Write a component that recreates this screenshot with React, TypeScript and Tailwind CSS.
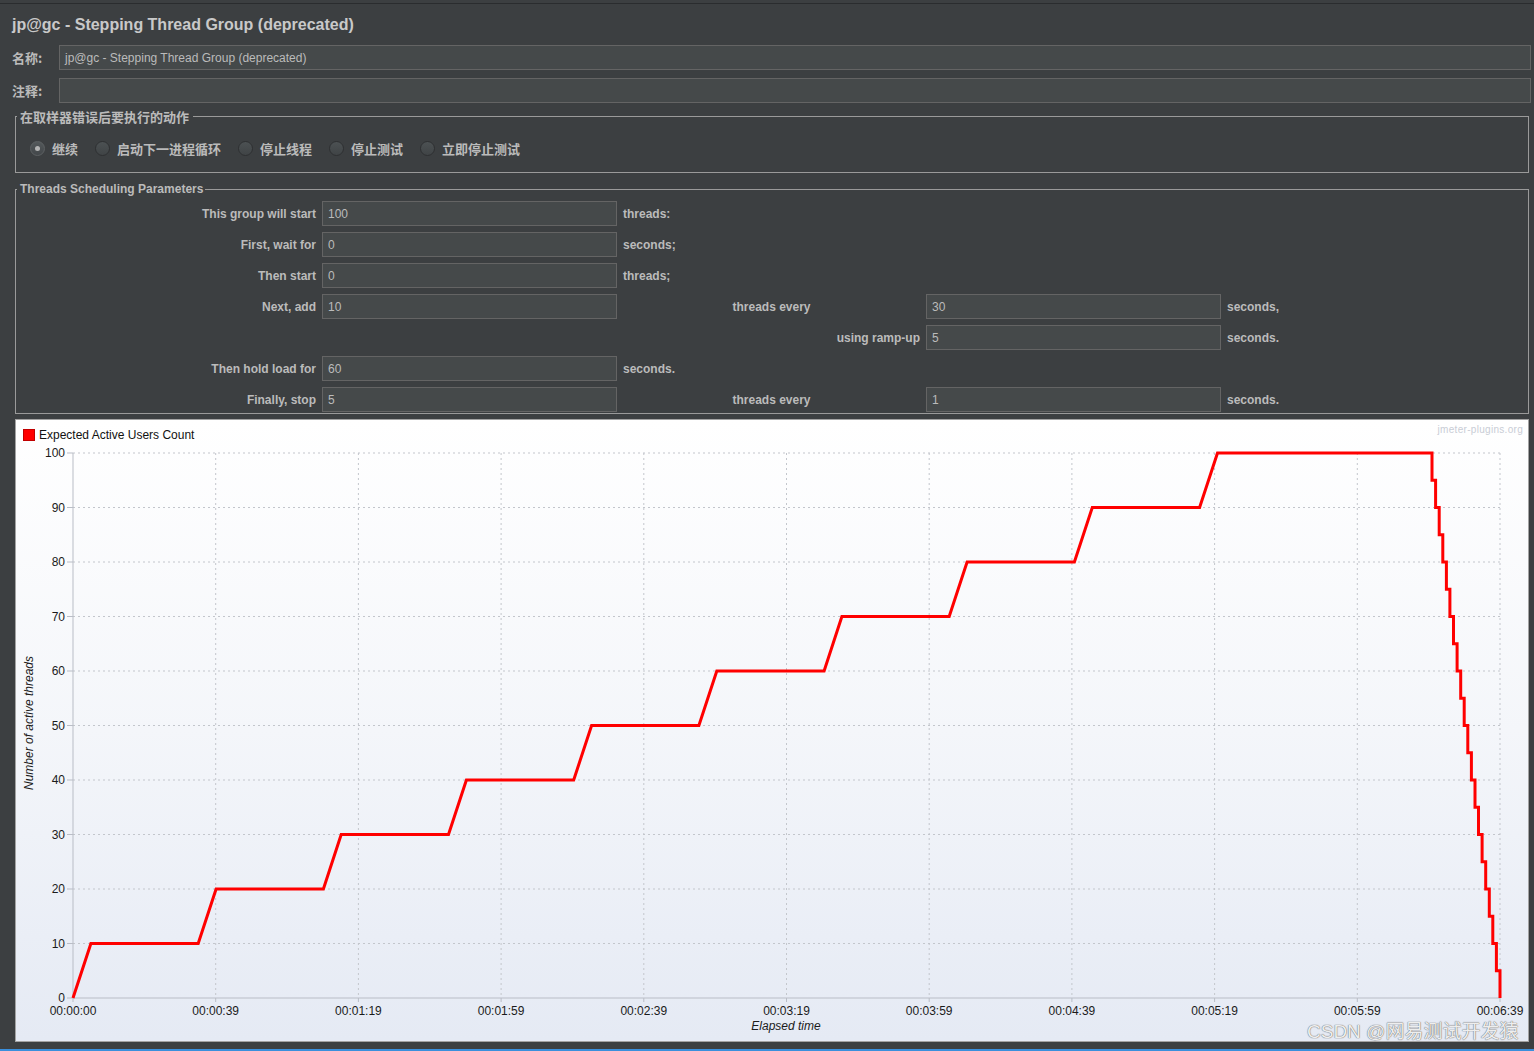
import React from 'react';

type ParamRow = {
  label?: string;
  value?: string;
  unit?: string;
  mid?: string;
  midRight?: boolean;
  value2?: string;
  unit2?: string;
};

const params: ParamRow[] = [
  { label: 'This group will start', value: '100', unit: 'threads:' },
  { label: 'First, wait for', value: '0', unit: 'seconds;' },
  { label: 'Then start', value: '0', unit: 'threads;' },
  { label: 'Next, add', value: '10', mid: 'threads every', value2: '30', unit2: 'seconds,' },
  { mid: 'using ramp-up', midRight: true, value2: '5', unit2: 'seconds.' },
  { label: 'Then hold load for', value: '60', unit: 'seconds.' },
  { label: 'Finally, stop', value: '5', mid: 'threads every', value2: '1', unit2: 'seconds.' },
];

const radios = ['继续', '启动下一进程循环', '停止线程', '停止测试', '立即停止测试'];

const xLabels = [
  '00:00:00', '00:00:39', '00:01:19', '00:01:59', '00:02:39', '00:03:19',
  '00:03:59', '00:04:39', '00:05:19', '00:05:59', '00:06:39',
];

// chart coords (svg origin = panel inner top-left below the legend)
const X = (t: number) => 57 + t * (1427 / 399);
const Y = (v: number) => 553 - v * 5.45;

const buildLine = () => {
  const pts: [number, number][] = [[0, 0]];
  for (let k = 0; k < 10; k++) {
    pts.push([35 * k + 5, 10 * k + 10]);
    pts.push([k < 9 ? 35 * (k + 1) : 380, 10 * k + 10]);
  }
  for (let i = 0; i < 20; i++) {
    pts.push([380 + i, 95 - 5 * i]);
    if (i < 19) pts.push([381 + i, 95 - 5 * i]);
  }
  return pts.map(([t, v]) => `${X(t).toFixed(1)},${Y(v).toFixed(1)}`).join(' ');
};

const Field: React.FC<{ value?: string }> = ({ value }) => (
  <div className="h-[25px] bg-[#45494a] border border-[#646464] pl-[5px] flex items-center text-[12px] font-normal text-[#bbbbbb]">
    {value}
  </div>
);

const Radio: React.FC<{ checked?: boolean; label: string }> = ({ checked, label }) => (
  <div className="flex items-center mr-[17px]">
    <div
      className={
        checked
          ? 'w-[15px] h-[15px] rounded-full border border-[#5d6163] bg-gradient-to-b from-[#53585a] to-[#43474a] flex items-center justify-center'
          : 'w-[15px] h-[15px] rounded-full border border-[#2e3032] bg-gradient-to-b from-[#4c5153] to-[#404446]'
      }
    >
      {checked && <div className="w-[5px] h-[5px] rounded-full bg-[#b4b4b4]" />}
    </div>
    <span className="ml-[7px] text-[13px] font-bold text-[#bbbbbb] leading-[17px]">{label}</span>
  </div>
);

const Chart: React.FC = () => {
  const hLines = Array.from({ length: 11 }, (_, i) => i * 10);
  return (
    <svg width={1512} height={596} className="block" fontFamily="'Liberation Sans', Arial, sans-serif">
      {/* grid */}
      {hLines.slice(1).map((v) => (
        <line key={`h${v}`} x1={57} x2={1484} y1={Y(v)} y2={Y(v)} stroke="#c3c6cc" strokeDasharray="2 3" />
      ))}
      {xLabels.slice(1).map((_, i) => (
        <line key={`v${i}`} x1={57 + (i + 1) * 142.7} x2={57 + (i + 1) * 142.7} y1={Y(100)} y2={Y(0)} stroke="#c3c6cc" strokeDasharray="2 3" />
      ))}
      {/* axes */}
      <line x1={57} x2={57} y1={Y(100)} y2={Y(0)} stroke="#b9bdc6" />
      <line x1={57} x2={1484} y1={Y(0)} y2={Y(0)} stroke="#b9bdc6" />
      {hLines.map((v) => (
        <g key={`yt${v}`}>
          <line x1={51} x2={57} y1={Y(v)} y2={Y(v)} stroke="#b9bdc6" />
          <text x={49} y={Y(v) + 4} textAnchor="end" fontSize={12} fill="#1b1b1b">{v}</text>
        </g>
      ))}
      {xLabels.map((l, i) => (
        <g key={l}>
          <line x1={57 + i * 142.7} x2={57 + i * 142.7} y1={Y(0)} y2={Y(0) + 4} stroke="#b9bdc6" />
          <text x={57 + i * 142.7} y={570} textAnchor="middle" fontSize={12} fill="#1b1b1b">{l}</text>
        </g>
      ))}
      <text x={770} y={585} textAnchor="middle" fontSize={12} fontStyle="italic" fill="#1b1b1b">Elapsed time</text>
      <text transform="translate(17 278) rotate(-90)" textAnchor="middle" fontSize={12} fontStyle="italic" fill="#1b1b1b">
        Number of active threads
      </text>
      {/* series */}
      <polyline points={buildLine()} fill="none" stroke="#ff0000" strokeWidth={3} strokeLinejoin="miter" />
    </svg>
  );
};

const App: React.FC = () => {
  return (
    <div className="relative w-[1534px] h-[1051px] overflow-hidden bg-[#3c3f41] flex flex-col font-['Liberation_Sans','Noto_Sans_CJK_SC',sans-serif] text-[#bbbbbb]">
      {/* top rule */}
      <div className="h-[4px] border-b border-[#2a2c2e] shrink-0" />

      {/* Title */}
      <div className="h-[41px] flex items-center pl-[12px] text-[16px] font-bold text-[#c9c9c9] shrink-0">
        jp@gc - Stepping Thread Group (deprecated)
      </div>

      {/* Name / comment */}
      <div className="h-[25px] flex items-center shrink-0">
        <span className="w-[59px] shrink-0 pl-[12px] text-[13px] font-bold font-['Noto_Sans_CJK_SC',sans-serif]">名称:</span>
        <div className="flex-1 mr-[3px]">
          <Field value="jp@gc - Stepping Thread Group (deprecated)" />
        </div>
      </div>
      <div className="h-[25px] mt-[8px] flex items-center shrink-0">
        <span className="w-[59px] shrink-0 pl-[12px] text-[13px] font-bold font-['Noto_Sans_CJK_SC',sans-serif]">注释:</span>
        <div className="flex-1 mr-[3px]">
          <Field />
        </div>
      </div>

      {/* Error action */}
      <fieldset className="mt-[5px] ml-[15px] mr-[5px] border border-[#9a9a9a] shrink-0">
        <legend className="ml-[1px] pl-[3px] pr-[4px] text-[13px] leading-[17px] font-bold font-['Noto_Sans_CJK_SC',sans-serif] text-[#bbbbbb]">
          在取样器错误后要执行的动作
        </legend>
        <div className="pt-[14px] pb-[14px] pl-[14px] h-[47px] flex items-center font-['Noto_Sans_CJK_SC',sans-serif]">
          {radios.map((r, i) => (
            <Radio key={r} label={r} checked={i === 0} />
          ))}
        </div>
      </fieldset>

      {/* Threads scheduling */}
      <fieldset className="mt-[9px] ml-[15px] mr-[5px] border border-[#9a9a9a] shrink-0">
        <legend className="ml-[1px] pl-[3px] pr-[2px] text-[12px] leading-[15px] font-bold text-[#bbbbbb]">
          Threads Scheduling Parameters
        </legend>
        <div className="pt-[4px] pb-[1px] grid grid-cols-[306px_295px_309px_295px_1fr] gap-y-[6px] text-[12px] font-bold text-[#bbbbbb]">
          {params.map((p, i) => (
            <React.Fragment key={i}>
              <div className="h-[25px] flex items-center justify-end pr-[6px]">{p.label}</div>
              {p.value !== undefined ? <Field value={p.value} /> : <div />}
              {p.unit ? (
                <div className="h-[25px] flex items-center pl-[6px]">{p.unit}</div>
              ) : p.midRight ? (
                <div className="h-[25px] flex items-center justify-end pr-[6px]">{p.mid}</div>
              ) : (
                <div className="h-[25px] flex items-center justify-center">{p.mid}</div>
              )}
              {p.value2 !== undefined ? <Field value={p.value2} /> : <div />}
              <div className="h-[25px] flex items-center pl-[6px]">{p.unit2}</div>
            </React.Fragment>
          ))}
        </div>
      </fieldset>

      {/* Chart */}
      <div className="relative mt-[5px] ml-[15px] mr-[5px] h-[623px] shrink-0 border border-[#a3a3a3] bg-gradient-to-b from-white via-[#f4f6fa] to-[#e5eaf4]">
        <div className="h-[25px] pt-[5px] pl-[7px] flex items-center gap-[4px] text-[12px] text-[#111111] font-['Liberation_Sans',Arial,sans-serif]">
          <span className="w-[12px] h-[12px] bg-[#ff0000] border border-[#c00000]" />
          <span>Expected Active Users Count</span>
        </div>
        <span className="absolute top-[2px] right-[5px] text-[10px] text-[#c9cdd6] tracking-[0.3px]">jmeter-plugins.org</span>
        <Chart />
      </div>

      <div className="flex-1" />
      <div className="h-[2px] bg-[#3a8fdc] shrink-0" />

      {/* CSDN watermark */}
      <span className="absolute left-[1307px] top-[1020px] whitespace-nowrap text-[19px] leading-[24px] text-[#eeeeee] font-['Liberation_Sans','Noto_Sans_CJK_SC',sans-serif] [text-shadow:0_0_1px_#6f6f6f,0_0_1px_#6f6f6f]">
        CSDN @网易测试开发猿
      </span>
    </div>
  );
};

export default App;
